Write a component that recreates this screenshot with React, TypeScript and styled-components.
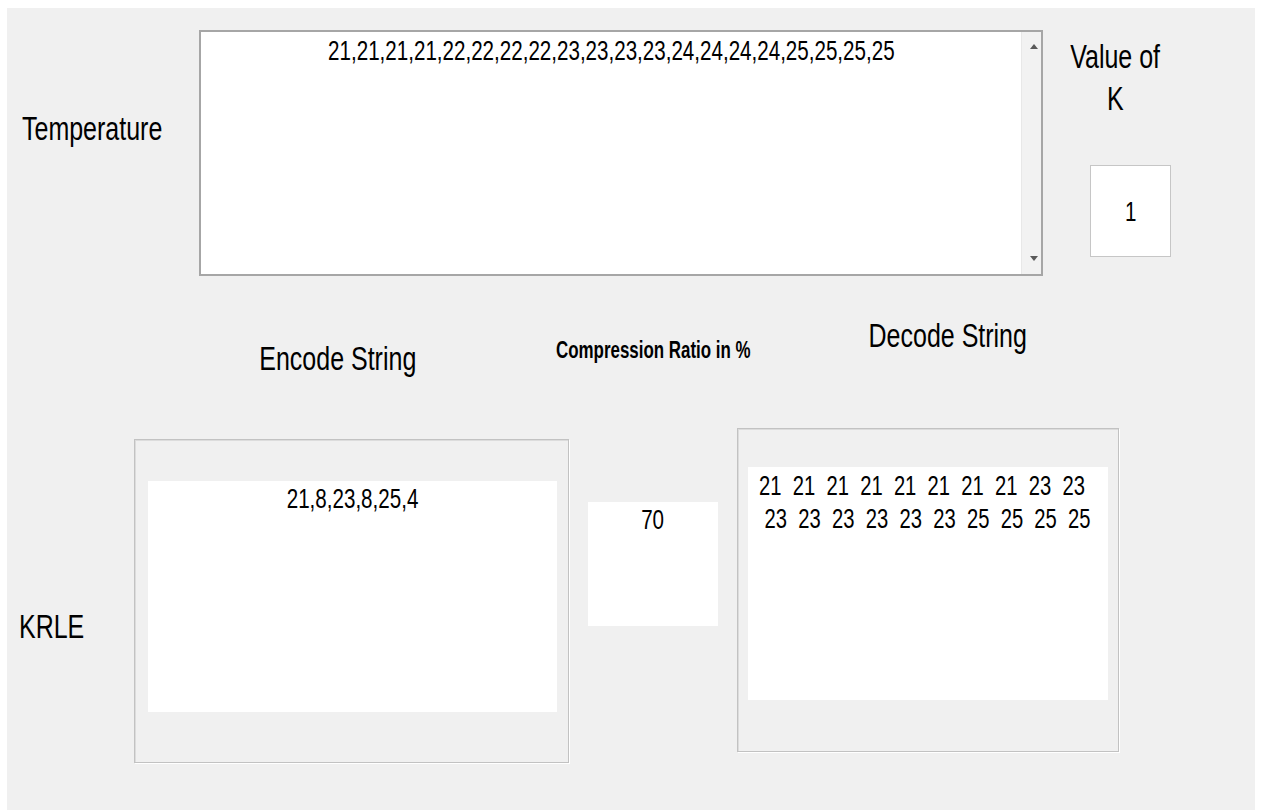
import styled, { createGlobalStyle } from "styled-components";

const GlobalStyle = createGlobalStyle`
  html, body {
    margin: 0;
    padding: 0;
    background: #ffffff;
  }
  body {
    font-family: "Liberation Sans", Arial, sans-serif;
    color: #000;
  }
`;

const temperatures =
  "21,21,21,21,22,22,22,22,23,23,23,23,24,24,24,24,25,25,25,25";
const encoded = "21,8,23,8,25,4";
const decoded = [
  "21  21  21  21  21  21  21  21  23  23",
  " 23  23  23  23  23  23  25  25  25  25",
];

// Narrow text, like the condensed UI font of the figure window
const Narrow = styled.span<{ $origin?: string; $scale?: number }>`
  display: inline-block;
  white-space: pre;
  transform: scaleX(${(p) => p.$scale ?? 0.735});
  transform-origin: ${(p) => p.$origin ?? "center"} top;
`;

const Figure = styled.div`
  margin: 8px 6px 0 7px;
  height: 802px;
  background: #f0f0f0;
  display: flex;
  flex-direction: column;
  overflow: hidden;
`;

const TopRow = styled.div`
  display: grid;
  grid-template-columns: 192px 844px auto;
  align-items: start;
  padding-top: 22px;
`;

const Label = styled.div<{ $top: number; $left?: number }>`
  margin-top: ${(p) => p.$top}px;
  padding-left: ${(p) => p.$left ?? 0}px;
  font-size: 34px;
  line-height: 42px;
  white-space: nowrap;
`;

const Heading = styled.div<{ $top: number; $shift?: number }>`
  margin-top: ${(p) => p.$top}px;
  display: flex;
  justify-content: center;
  padding-left: ${(p) => Math.max(0, p.$shift ?? 0)}px;
  padding-right: ${(p) => Math.max(0, -(p.$shift ?? 0))}px;
  font-size: 34px;
  line-height: 42px;
  white-space: nowrap;
`;

const SmallHeading = styled(Heading)`
  font-size: 23px;
  line-height: 28px;
  font-weight: bold;
`;

const ListBox = styled.div`
  height: 246px;
  box-sizing: border-box;
  border: 2px solid #a6a6a6;
  background: #fff;
  display: flex;
`;

const ListText = styled.div`
  flex: 1;
  text-align: center;
  padding-top: 2px;
  font-size: 28px;
  line-height: 33px;
`;

const ScrollBar = styled.div`
  width: 20px;
  background: #f2f2f2;
  border-left: 1px solid #e8e8e8;
  display: flex;
  flex-direction: column;
  justify-content: space-between;
  align-items: center;
  padding: 12px 0 13px 4px;
  box-sizing: border-box;
`;

const RightColumn = styled.div`
  display: flex;
  flex-direction: column;
  align-items: flex-start;
`;

const ValueLabel = styled(Label)`
  width: 144px;
  text-align: center;
`;

const KBox = styled.div`
  margin: 46px 0 0 47px;
  width: 81px;
  height: 92px;
  box-sizing: border-box;
  border: 1px solid #c6c6c6;
  background: #fff;
  display: flex;
  align-items: center;
  justify-content: center;
  font-size: 28px;
  line-height: 33px;
`;

const BottomArea = styled.div`
  display: grid;
  grid-template-columns: 108px 435px 130px 382px;
  column-gap: 19px;
  align-items: start;
`;

const Column = styled.div`
  display: flex;
  flex-direction: column;
`;

const Panel = styled.div<{ $top: number; $pad: string }>`
  margin-top: ${(p) => p.$top}px;
  height: 324px;
  box-sizing: border-box;
  border: 1px solid #c2c2c2;
  box-shadow: inset 1px 1px 0 #dcdcdc, 1px 1px 0 #ffffff;
  padding: ${(p) => p.$pad};
  display: flex;
`;

const Field = styled.div<{ $align?: string; $padTop: number; $padLeft?: number }>`
  flex: 1;
  background: #fff;
  text-align: ${(p) => p.$align ?? "center"};
  padding-top: ${(p) => p.$padTop}px;
  padding-left: ${(p) => p.$padLeft ?? 0}px;
  font-size: 28px;
  line-height: 33px;
  overflow: hidden;
`;

const RatioBox = styled.div`
  margin-top: 138px;
  height: 124px;
  background: #fff;
  text-align: center;
  padding-top: 1px;
  box-sizing: border-box;
  font-size: 28px;
  line-height: 33px;
`;

const Arrow = ({ up }: { up?: boolean }) => (
  <svg width="8" height="5" viewBox="0 0 8 5">
    <path d={up ? "M0 5 L4 0 L8 5 Z" : "M0 0 L8 0 L4 5 Z"} fill="#5a5a5a" />
  </svg>
);

export default function App() {
  return (
    <>
      <GlobalStyle />
      <Figure>
        <TopRow>
          <Label $top={77} $left={15}>
            <Narrow $origin="left">Temperature</Narrow>
          </Label>
          <ListBox>
            <ListText>
              <Narrow>{temperatures}</Narrow>
            </ListText>
            <ScrollBar>
              <Arrow up />
              <Arrow />
            </ScrollBar>
          </ListBox>
          <RightColumn>
            <ValueLabel $top={5}>
              <Narrow>Value of</Narrow>
              <br />
              <Narrow>K</Narrow>
            </ValueLabel>
            <KBox>
              <Narrow>1</Narrow>
            </KBox>
          </RightColumn>
        </TopRow>

        <BottomArea>
          <Column>
            <Label $top={329} $left={12}>
              <Narrow $origin="left">KRLE</Narrow>
            </Label>
          </Column>

          <Column>
            <Heading $top={61} $shift={-27}>
              <Narrow>Encode String</Narrow>
            </Heading>
            <Panel $top={60} $pad="41px 11px 50px 13px">
              <Field $padTop={1}>
                <Narrow>{encoded}</Narrow>
              </Field>
            </Panel>
          </Column>

          <Column>
            <SmallHeading $top={60}>
              <Narrow>Compression Ratio in %</Narrow>
            </SmallHeading>
            <RatioBox>
              <Narrow>70</Narrow>
            </RatioBox>
          </Column>

          <Column>
            <Heading $top={38} $shift={39}>
              <Narrow>Decode String</Narrow>
            </Heading>
            <Panel $top={72} $pad="38px 10px 51px 10px">
              <Field $align="left" $padTop={2} $padLeft={11}>
                <Narrow $origin="left" $scale={0.722}>
                  {decoded.join("\n")}
                </Narrow>
              </Field>
            </Panel>
          </Column>
        </BottomArea>
      </Figure>
    </>
  );
}
